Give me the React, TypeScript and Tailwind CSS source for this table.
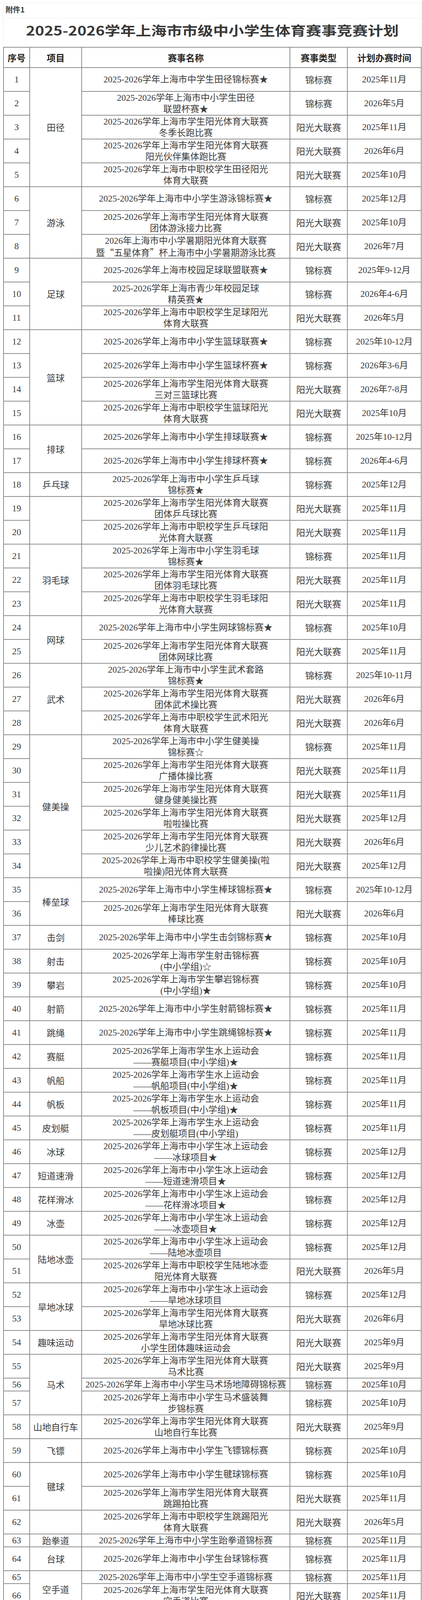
import { Fragment } from "react"

type Row = [string, "J" | "Y", string]

const J = "锦标赛"
const Y = "阳光大联赛"

const ROWS: Row[] = [
  ["2025-2026学年上海市中学生田径锦标赛★", "J", "2025年11月"],
  ["2025-2026学年上海市中小学生田径\n联盟杯赛★", "J", "2026年5月"],
  ["2025-2026学年上海市学生阳光体育大联赛\n冬季长跑比赛", "Y", "2025年11月"],
  ["2025-2026学年上海市学生阳光体育大联赛\n阳光伙伴集体跑比赛", "Y", "2026年6月"],
  ["2025-2026学年上海市中职校学生田径阳光\n体育大联赛", "Y", "2025年10月"],
  ["2025-2026学年上海市中小学生游泳锦标赛★", "J", "2025年12月"],
  ["2025-2026学年上海市学生阳光体育大联赛\n团体游泳接力比赛", "Y", "2025年10月"],
  ["2026年上海市中小学暑期阳光体育大联赛\n暨“五星体育”杯上海市中小学暑期游泳比赛", "Y", "2026年7月"],
  ["2025-2026学年上海市校园足球联盟联赛★", "J", "2025年9-12月"],
  ["2025-2026学年上海市青少年校园足球\n精英赛★", "J", "2026年4-6月"],
  ["2025-2026学年上海市中职校学生足球阳光\n体育大联赛", "Y", "2026年5月"],
  ["2025-2026学年上海市中小学生篮球联赛★", "J", "2025年10-12月"],
  ["2025-2026学年上海市中小学生篮球杯赛★", "J", "2026年3-6月"],
  ["2025-2026学年上海市学生阳光体育大联赛\n三对三篮球比赛", "Y", "2026年7-8月"],
  ["2025-2026学年上海市中职校学生篮球阳光\n体育大联赛", "Y", "2025年10月"],
  ["2025-2026学年上海市中小学生排球联赛★", "J", "2025年10-12月"],
  ["2025-2026学年上海市中小学生排球杯赛★", "J", "2026年4-6月"],
  ["2025-2026学年上海市中小学生乒乓球\n锦标赛★", "J", "2025年12月"],
  ["2025-2026学年上海市学生阳光体育大联赛\n团体乒乓球比赛", "Y", "2025年11月"],
  ["2025-2026学年上海市中职校学生乒乓球阳\n光体育大联赛", "Y", "2025年11月"],
  ["2025-2026学年上海市中小学生羽毛球\n锦标赛★", "J", "2025年11月"],
  ["2025-2026学年上海市学生阳光体育大联赛\n团体羽毛球比赛", "Y", "2025年11月"],
  ["2025-2026学年上海市中职校学生羽毛球阳\n光体育大联赛", "Y", "2025年11月"],
  ["2025-2026学年上海市中小学生网球锦标赛★", "J", "2025年10月"],
  ["2025-2026学年上海市学生阳光体育大联赛\n团体网球比赛", "Y", "2025年11月"],
  ["2025-2026学年上海市中小学生武术套路\n锦标赛★", "J", "2025年10-11月"],
  ["2025-2026学年上海市学生阳光体育大联赛\n团体武术操比赛", "Y", "2026年6月"],
  ["2025-2026学年上海市中职校学生武术阳光\n体育大联赛", "Y", "2026年6月"],
  ["2025-2026学年上海市中小学生健美操\n锦标赛☆", "J", "2025年11月"],
  ["2025-2026学年上海市学生阳光体育大联赛\n广播体操比赛", "Y", "2025年11月"],
  ["2025-2026学年上海市学生阳光体育大联赛\n健身健美操比赛", "Y", "2025年11月"],
  ["2025-2026学年上海市学生阳光体育大联赛\n啦啦操比赛", "Y", "2025年12月"],
  ["2025-2026学年上海市学生阳光体育大联赛\n少儿艺术韵律操比赛", "Y", "2026年6月"],
  ["2025-2026学年上海市中职校学生健美操(啦\n啦操)阳光体育大联赛", "Y", "2025年12月"],
  ["2025-2026学年上海市中小学生棒球锦标赛★", "J", "2025年10-12月"],
  ["2025-2026学年上海市学生阳光体育大联赛\n棒球比赛", "Y", "2026年6月"],
  ["2025-2026学年上海市中小学生击剑锦标赛★", "J", "2025年10月"],
  ["2025-2026学年上海市学生射击锦标赛\n(中小学组)☆", "J", "2025年10月"],
  ["2025-2026学年上海市学生攀岩锦标赛\n(中小学组)★", "J", "2025年10月"],
  ["2025-2026学年上海市中小学生射箭锦标赛★", "J", "2025年11月"],
  ["2025-2026学年上海市中小学生跳绳锦标赛★", "J", "2025年11月"],
  ["2025-2026学年上海市学生水上运动会\n——赛艇项目(中小学组)★", "J", "2025年11月"],
  ["2025-2026学年上海市学生水上运动会\n——帆船项目(中小学组)★", "J", "2025年11月"],
  ["2025-2026学年上海市学生水上运动会\n——帆板项目(中小学组)★", "J", "2025年11月"],
  ["2025-2026学年上海市学生水上运动会\n——皮划艇项目(中小学组)", "J", "2025年11月"],
  ["2025-2026学年上海市中小学生冰上运动会\n——冰球项目★", "J", "2025年12月"],
  ["2025-2026学年上海市中小学生冰上运动会\n——短道速滑项目★", "J", "2025年12月"],
  ["2025-2026学年上海市中小学生冰上运动会\n——花样滑冰项目★", "J", "2025年12月"],
  ["2025-2026学年上海市中小学生冰上运动会\n——冰壶项目★", "J", "2025年12月"],
  ["2025-2026学年上海市中小学生冰上运动会\n——陆地冰壶项目", "J", "2025年12月"],
  ["2025-2026学年上海市中职校学生陆地冰壶\n阳光体育大联赛", "Y", "2026年5月"],
  ["2025-2026学年上海市中小学生冰上运动会\n——旱地冰球项目", "J", "2025年12月"],
  ["2025-2026学年上海市学生阳光体育大联赛\n旱地冰球比赛", "Y", "2026年6月"],
  ["2025-2026学年上海市学生阳光体育大联赛\n小学生团体趣味运动会", "Y", "2025年9月"],
  ["2025-2026学年上海市学生阳光体育大联赛\n马术比赛", "Y", "2025年9月"],
  ["2025-2026学年上海市中小学生马术场地障碍锦标赛", "J", "2025年10月"],
  ["2025-2026学年上海市中小学生马术盛装舞\n步锦标赛", "J", "2025年10月"],
  ["2025-2026学年上海市学生阳光体育大联赛\n山地自行车比赛", "Y", "2025年9月"],
  ["2025-2026学年上海市中小学生飞镖锦标赛", "J", "2025年10月"],
  ["2025-2026学年上海市中小学生毽球锦标赛", "J", "2025年10月"],
  ["2025-2026学年上海市学生阳光体育大联赛\n跳踢拍比赛", "Y", "2025年11月"],
  ["2025-2026学年上海市中职校学生跳踢阳光\n体育大联赛", "Y", "2026年5月"],
  ["2025-2026学年上海市中小学生跆拳道锦标赛", "J", "2025年11月"],
  ["2025-2026学年上海市中小学生台球锦标赛", "J", "2025年11月"],
  ["2025-2026学年上海市中小学生空手道锦标赛", "J", "2025年11月"],
  ["2025-2026学年上海市学生阳光体育大联赛\n空手道比赛", "Y", "2025年11月"],
  ["2025-2026学年上海市学生阳光体育大联赛\n保龄球比赛", "Y", "2025年10月"],
  ["2025-2026学年上海市中小学生保龄球锦标赛", "J", "2025年11月"],
  ["2025-2026学年上海市学生智力运动会\n——围棋项目(中小学组)", "J", "2025年11月"],
  ["2025-2026学年上海市中职校学生围棋阳光\n体育大联赛", "Y", "2025年10月"],
  ["2025-2026学年上海市学生智力运动会\n——象棋项目(中小学组)", "J", "2025年11月"],
  ["2025-2026学年上海市中职校学生象棋阳光\n体育大联赛", "Y", "2025年10月"],
  ["2025-2026学年上海市学生智力运动会\n——国际象棋项目(中小学组)", "J", "2025年11月"],
  ["2025-2026学年上海市中职校学生国际象棋\n阳光体育大联赛", "Y", "2025年10月"],
  ["2025-2026学年上海市学生智力运动会\n——国际跳棋项目(中小学组)", "J", "2025年11月"],
  ["2025-2026学年上海市学生智力运动会\n——五子棋项目(中小学组)", "J", "2025年11月"],
  ["2025-2026学年上海市中职校学生五子棋阳\n光体育大联赛", "Y", "2025年10月"],
  ["2025-2026学年上海市学生智力运动会\n——桥牌项目(中小学组)", "J", "2025年11月"],
  ["2025-2026学年上海市学生阳光体育大联赛\n团体桥牌比赛", "Y", "2026年6月"],
  ["2025-2026学年上海市学生壁球锦标赛\n(中小学组)", "J", "2025年11月"],
  ["2025-2026学年上海市中小学生高尔夫锦标赛", "J", "2025年11月"],
  ["2025-2026学年上海市学生阳光体育大联赛\n趣味定向越野比赛", "Y", "2025年11月"],
  ["2025-2026学年上海市学生阳光体育大联赛\n体育舞蹈比赛", "Y", "2025年11月"],
  ["2025-2026学年上海市学生阳光体育大联赛\n匹克球比赛", "Y", "2026年5月"],
  ["2025-2026学年上海市学生阳光体育大联赛\n腰旗橄榄球比赛", "Y", "2026年5月"],
  ["2025-2026学年上海市中小学生体操锦标赛", "J", "2026年5月"],
  ["2025-2026学年上海市中职校学生广播操阳\n光体育大联赛", "Y", "2026年4月"],
  ["2025-2026学年上海市中职校学生简化太极\n拳阳光体育大联赛", "Y", "2026年6月"],
]

// 项目 column: label + number of rows it covers
const GROUPS: [string, number][] = [
  ["田径", 5], ["游泳", 3], ["足球", 3], ["篮球", 4], ["排球", 2], ["乒乓球", 1], ["", 2],
  ["羽毛球", 3], ["网球", 2], ["武术", 3], ["健美操", 6], ["棒垒球", 2], ["击剑", 1],
  ["射击", 1], ["攀岩", 1], ["射箭", 1], ["跳绳", 1], ["赛艇", 1], ["帆船", 1], ["帆板", 1],
  ["皮划艇", 1], ["冰球", 1], ["短道速滑", 1], ["花样滑冰", 1], ["冰壶", 1], ["陆地冰壶", 2],
  ["旱地冰球", 2], ["趣味运动", 1], ["马术", 3], ["山地自行车", 1], ["飞镖", 1], ["毽球", 2],
  ["", 1], ["跆拳道", 1], ["台球", 1], ["空手道", 2], ["保龄球", 2], ["围棋", 2], ["象棋", 2],
  ["国际象棋", 2], ["国际跳棋", 1], ["五子棋", 2], ["桥牌", 2], ["壁球", 1], ["高尔夫", 1],
  ["定向越野", 1], ["体育舞蹈", 1], ["匹克球", 1], ["腰旗橄榄球", 1], ["体操", 1], ["广播操", 1],
  ["简化太极拳", 1],
]

const SPAN: Record<number, string> = {
  1: "row-span-1",
  2: "row-span-2",
  3: "row-span-3",
  4: "row-span-4",
  5: "row-span-5",
  6: "row-span-6",
}

const SHORT = new Set([56, 63, 65, 68, 81])

const starts = new Map<number, [string, number]>()
{
  let n = 1
  for (const g of GROUPS) {
    starts.set(n, g)
    n += g[1]
  }
}

const SERIF = "font-[family-name:Liberation_Serif,Noto_Sans_CJK_SC,serif]"
const CJK = "font-[family-name:Noto_Sans_CJK_SC,sans-serif]"
const cell = "bg-white flex flex-col items-center justify-center text-center text-[23px] leading-[29px] text-[#3c3c3c]"

// one text line of fixed height, so mixed fonts cannot stretch the row
function Line({ children, className = "" }: { children: React.ReactNode; className?: string }) {
  return <div className={`flex h-[29px] items-center whitespace-nowrap ${className}`}>{children}</div>
}

function Table() {
  return (
    <div className="ml-[8px] grid w-[1071px] grid-cols-[65px_131px_531px_145px_187px] gap-[2px] bg-[#8f8f8f] p-[2px]">
      {["序号", "项目", "赛事名称", "赛事类型", "计划办赛时间"].map((h) => (
        <div key={h} className={`${CJK} h-[50px] bg-white flex items-center justify-center text-[23px] font-bold text-[#262626]`}>
          <Line>{h}</Line>
        </div>
      ))}
      {ROWS.map((r, i) => {
        const n = i + 1
        const g = starts.get(n)
        return (
          <Fragment key={n}>
            <div className={`col-start-1 ${cell} ${SERIF}`}>
              <Line>{n}</Line>
            </div>
            {g && (
              <div className={`col-start-2 ${SPAN[g[1]]} ${cell} ${CJK}`}>
                {g[0] && <Line>{g[0]}</Line>}
              </div>
            )}
            <div className={`col-start-3 ${cell} ${SHORT.has(n) ? "h-[31px]" : "h-[59px]"}`}>
              {r[0].split("\n").map((l, k) => (
                <Line key={k} className={l.includes("“") ? CJK : SERIF}>
                  {l}
                </Line>
              ))}
            </div>
            <div className={`col-start-4 ${cell} ${CJK}`}>
              <Line>{r[1] === "J" ? J : Y}</Line>
            </div>
            <div className={`col-start-5 ${cell} ${SERIF}`}>
              <Line>{r[2]}</Line>
            </div>
          </Fragment>
        )
      })}
    </div>
  )
}

function Notes() {
  const sep = "border-t border-[#ececec]"
  const wide = `${CJK} flex items-center text-[17px] tracking-[8px] text-[#4a4a4a] whitespace-nowrap`
  const body = `${CJK} flex h-[32px] items-center text-[21px] tracking-[3.8px] text-[#3c3c3c] whitespace-nowrap`
  const hot = `${CJK} flex h-[31px] items-center text-[20px] tracking-[4px] text-[#444] whitespace-nowrap`
  return (
    <div className="ml-[8px] w-[1071px] overflow-hidden border-x-2 border-b-2 border-[#8f8f8f] pl-[4px]">
      <div className={`${CJK} flex h-[42px] items-center text-[20px] text-[#3c3c3c]`}>注：</div>
      <div className={`${sep} pt-[1px]`}>
        <div className={`${wide} h-[34px]`}>1.标“★”赛事的全部小项(项目)纳入可申请上海市初中毕业升学体育考试统一考试免考赛事范</div>
        <div className={`${wide} h-[34px]`}>围。</div>
      </div>
      <div className={`${sep} pt-[12px] pb-[3px]`}>
        <div className={`${wide} h-[30px]`}>2.标“☆”赛事中的部分小项(项目)纳入可申请上海市体育中考统一考试免考赛事范围，详见各</div>
        <div className={`${wide} h-[30px]`}>竞赛规程。</div>
      </div>
      <div className={`${sep} pt-[11px] pb-[2px]`}>
        <div className={body}>3. 参赛资格</div>
        <div className={body}>
          参赛学生须为本市中小学校在籍在读，参赛组别以学龄段划分。比赛时间为每年<b className="font-semibold">9</b>月至次年<b className="font-semibold">6</b>月，
        </div>
        <div className={body}>各参赛代表队以校(或以区)为单位组队报名(具体要求以单项竞赛规程为准)。各单项竞赛规程一</div>
        <div className={body}>
          般于比赛前<b className="font-semibold">30</b>天，在市学生体育艺术科技教育活动平台上发布(可在平台下载比赛规程并查询具
        </div>
        <div className={`${body} !h-[40px]`}>
          <span>体参赛办法。网址：</span>
          <span className="font-[family-name:Liberation_Serif,serif] text-[24px] tracking-normal text-[#333]">https://shsunshin</span>
          <span className="font-[family-name:Liberation_Serif,serif] text-[30px] tracking-normal text-[#333]">e-zp.shec.edu.cn/Channel/Sport)</span>
          <span>。</span>
        </div>
      </div>
      <div className={`${sep} pt-[17px] pb-[9px]`}>
        <div className={hot}>4.咨询服务热线</div>
        <div className={hot}>
          上海市中小学生体育锦标赛：<span className="font-semibold tracking-[1px] text-[#2e2e2e]">4008328399转3</span>
        </div>
        <div className={hot}>
          上海市学生阳光体育大联赛：<span className="font-semibold tracking-[1px] text-[#2e2e2e]">96999166</span>
        </div>
        <div className={hot}>
          上海市中职校学生阳光体育大联赛：<span className="tracking-[1px]">62778705</span>
        </div>
      </div>
    </div>
  )
}

export default function App() {
  return (
    <div className="w-[1080px] bg-white">
      <div className="pt-[7px] pl-[8px] pr-[1px]">
        <div className="border border-b-0 border-[#ececec]">
          <div className={`${CJK} h-[39px] border-b border-[#efefef] pt-[4px] pl-[5px] text-[19px] font-bold leading-[24px] text-[#3a3a3a]`}>
            附件1
          </div>
          <div className="flex h-[73px] items-center justify-center overflow-hidden pb-[14px]">
            <span className={`${CJK} inline-block origin-center scale-x-[1.2] text-[33px] leading-[40px] font-bold text-[#383838]`}>
              2025-2026学年上海市市级中小学生体育赛事竞赛计划
            </span>
          </div>
        </div>
      </div>
      <Table />
      <Notes />
    </div>
  )
}
